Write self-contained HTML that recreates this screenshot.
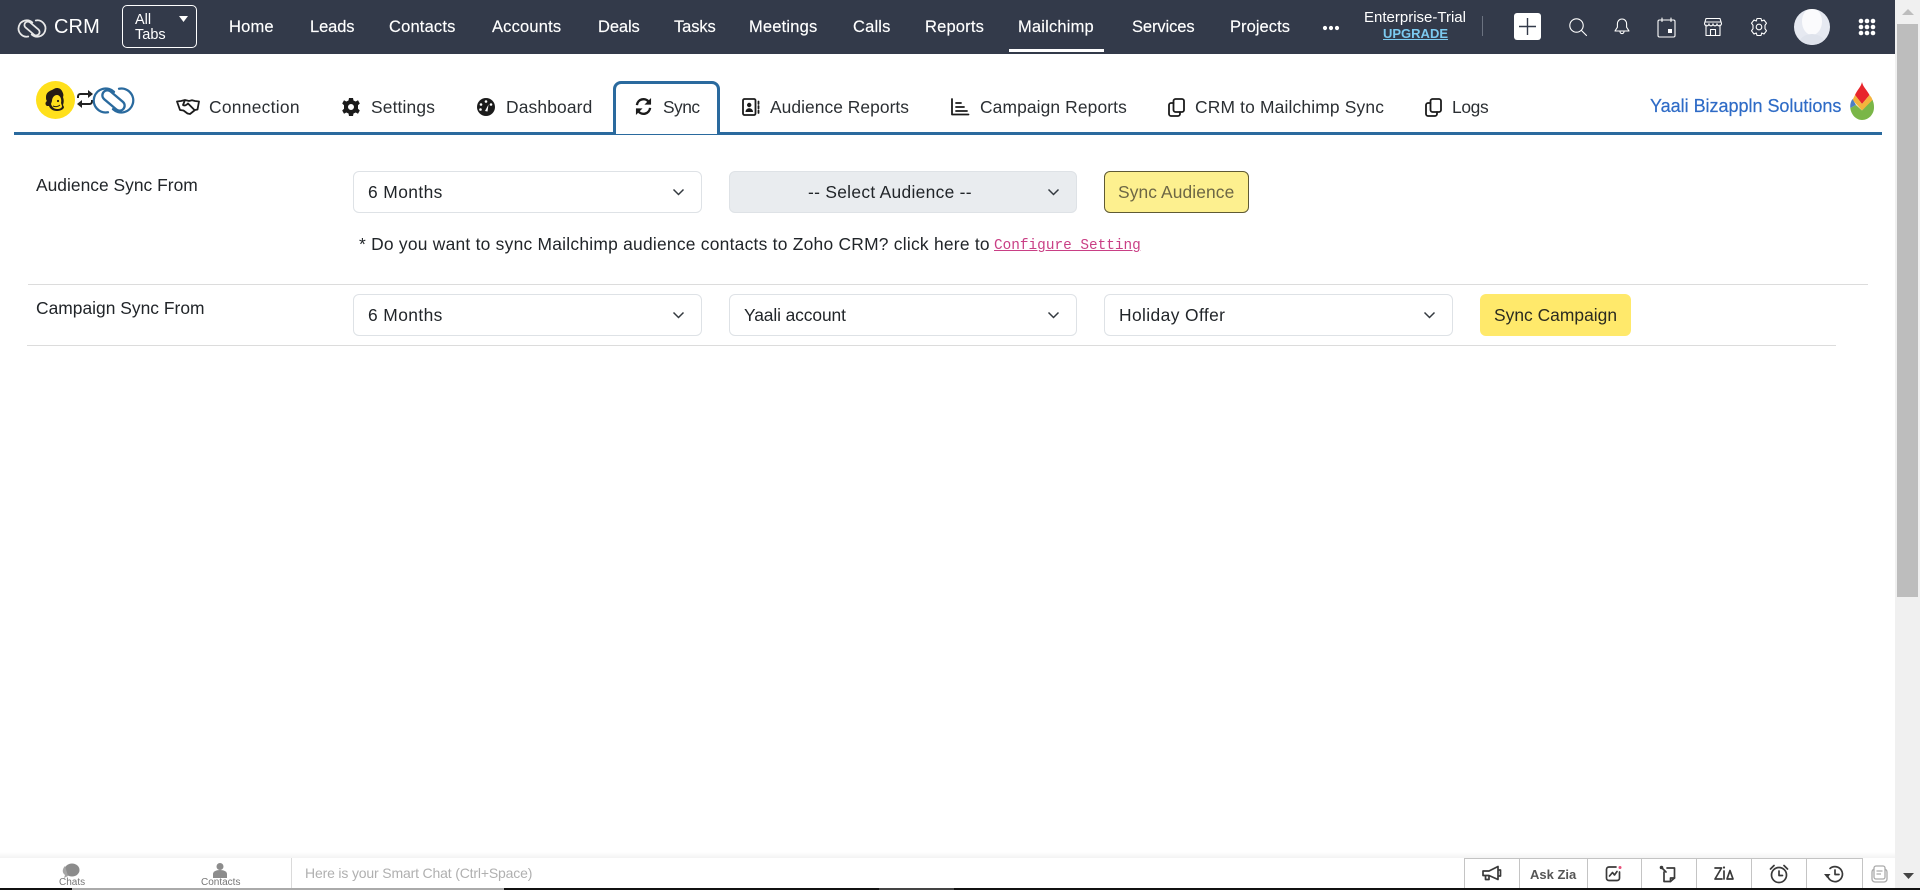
<!DOCTYPE html>
<html><head><meta charset="utf-8"><title>Mailchimp Sync</title>
<style>
html,body{margin:0;padding:0;width:1920px;height:890px;overflow:hidden;background:#fff;font-family:"Liberation Sans",sans-serif}
.a{position:absolute}
.t{position:absolute;white-space:nowrap}
.n{top:14px;line-height:26px;height:26px;font-size:16.5px;letter-spacing:.18px;color:#fff;-webkit-text-stroke:.15px #fff}
.tab{top:94px;line-height:26px;font-size:17.4px;letter-spacing:.05px;color:#2b2f33}
.lab{font-size:17.4px;letter-spacing:.02px;line-height:26px;color:#212529}
.sel{position:absolute;box-sizing:border-box;height:42px;border:1px solid #dee2e6;border-radius:6px;background:#fff}
.sel span{position:absolute;left:14px;top:7px;line-height:26px;font-size:17.4px;letter-spacing:.3px;color:#212529;white-space:nowrap}
.sel svg{position:absolute;right:16px;top:14px}
svg{position:absolute;overflow:visible}
.hi{fill:none;stroke:#fff;stroke-width:1.1;stroke-linecap:round;stroke-linejoin:round}
.bi{fill:none;stroke:#3a3a3a;stroke-width:1.7;stroke-linecap:round;stroke-linejoin:round}
.ti{fill:none;stroke:#1b1b1b;stroke-width:1.8;stroke-linecap:round;stroke-linejoin:round}
.dv{position:absolute;top:858px;width:1px;height:30px;background:#c4c4c4}
</style></head><body>

<!-- header -->
<div class="a" style="left:0;top:0;width:1895px;height:54px;background:#333a4a"></div>
<svg style="left:18px;top:19px" width="28" height="19" viewBox="0 0 41 27"><g fill="none" stroke="#e8e8e8" stroke-width="2.600" stroke-linecap="round"><path d="M21 4.800A12 12 0 1 0 15 25.300"/><path d="M20 22.200A12 12 0 1 0 26 1.700"/><rect x="7.500" y="8.500" width="26" height="10" rx="5" transform="rotate(40 20.500 13.500)"/></g></svg>
<div class="t" style="left:54px;top:14px;line-height:26px;font-size:20px;letter-spacing:.1px;color:#fff">CRM</div>
<div class="a" style="left:122px;top:5px;width:75px;height:43px;box-sizing:border-box;border:1.5px solid #fff;border-radius:5px"></div>
<div class="t" style="left:135px;top:13px;font-size:14.5px;line-height:14.5px;color:#fff">All<br>Tabs</div>
<svg style="left:179px;top:16px" width="9" height="6"><path d="M0 0H9L4.5 6Z" fill="#fff"/></svg>

<div class="t n" style="left:229px">Home</div>
<div class="t n" style="left:310px;letter-spacing:-.1px">Leads</div>
<div class="t n" style="left:389px">Contacts</div>
<div class="t n" style="left:492px">Accounts</div>
<div class="t n" style="left:598px;letter-spacing:-.1px">Deals</div>
<div class="t n" style="left:674px;letter-spacing:-.1px">Tasks</div>
<div class="t n" style="left:749px">Meetings</div>
<div class="t n" style="left:853px">Calls</div>
<div class="t n" style="left:925px">Reports</div>
<div class="t n" style="left:1018px">Mailchimp</div>
<div class="a" style="left:1009px;top:49px;width:95px;height:3px;background:#fff"></div>
<div class="t n" style="left:1132px;letter-spacing:-.1px">Services</div>
<div class="t n" style="left:1230px;letter-spacing:.05px">Projects</div>
<svg style="left:1322px;top:25px" width="18" height="6"><circle cx="3" cy="3" r="2.1" fill="#fff"/><circle cx="9" cy="3" r="2.1" fill="#fff"/><circle cx="15" cy="3" r="2.1" fill="#fff"/></svg>
<div class="t" style="left:1364px;top:9px;line-height:18px;font-size:15px;color:#fff">Enterprise-Trial</div>
<div class="t" style="left:1383px;top:26px;line-height:16px;font-size:13px;font-weight:700;color:#7ccaf0;text-decoration:underline">UPGRADE</div>
<div class="a" style="left:1482px;top:16px;width:1px;height:20px;background:#6b7280"></div>
<div class="a" style="left:1514px;top:13px;width:27px;height:27px;border-radius:3px;background:#fff"></div>
<svg style="left:1514px;top:13px" width="27" height="27"><path d="M13.5 5V22M5 13.5H22" stroke="#333a4a" stroke-width="1.4"/></svg>
<svg style="left:1568px;top:17px" width="20" height="20" viewBox="0 0 20 20"><circle cx="8.5" cy="8.5" r="6.7" class="hi"/><path d="M13.5 13.5 18.5 18.5" class="hi"/></svg>
<svg style="left:1612px;top:17px" width="20" height="20" viewBox="0 0 20 20"><path d="M10 2c-3 0-4.6 2.3-4.6 5v3.2L3 14h14l-2.4-3.800V7c0-2.700-1.600-5-4.600-5Z M8 14.500c0 2.800 4 2.800 4 0" class="hi"/></svg>
<svg style="left:1657px;top:17px" width="19" height="21" viewBox="0 0 19 21"><rect x="1" y="3" width="17" height="17" rx="1.500" class="hi"/><path d="M5 1V4.500M14 1V4.500" class="hi"/><rect x="11" y="12" width="4" height="4" fill="#fff"/></svg>
<svg style="left:1703px;top:17px" width="20" height="20" viewBox="0 0 20 20"><path d="M3 8V18.500H17V8M1.500 6.500 3 1.500H17L18.500 6.500C18.500 9.500 14 9.500 14 6.800 14 9.500 10 9.500 10 6.800 10 9.500 6 9.500 6 6.800 6 9.500 1.500 9.500 1.500 6.500ZM7.500 18.500V12.500H12.500V18.500M2 5H18" class="hi"/></svg>
<svg style="left:1749px;top:17px" width="20" height="20" viewBox="0 0 20 20"><path d="M8 1.500H12L12.700 4 15 3 17.500 6.200 16 8.300 16 11.700 17.500 13.800 15 17 12.700 16 12 18.500H8L7.300 16 5 17 2.500 13.800 4 11.700 4 8.300 2.500 6.200 5 3 7.300 4Z" class="hi"/><circle cx="10" cy="10" r="2.800" class="hi"/></svg>
<div class="a" style="left:1794px;top:9px;width:36px;height:36px;border-radius:50%;background:#e6e9f1;overflow:hidden">
<div class="a" style="left:8px;top:-1px;width:20px;height:27px;border-radius:50%;background:#fbfbfd"></div>
<div class="a" style="left:5px;top:25px;width:26px;height:20px;border-radius:50%;background:#dfe3ec"></div>
</div>
<svg style="left:1858px;top:18px" width="18" height="18"><g fill="#fff"><circle cx="3" cy="3" r="2.300"/><circle cx="9" cy="3" r="2.300"/><circle cx="15" cy="3" r="2.300"/><circle cx="3" cy="9" r="2.300"/><circle cx="9" cy="9" r="2.300"/><circle cx="15" cy="9" r="2.300"/><circle cx="3" cy="15" r="2.300"/><circle cx="9" cy="15" r="2.300"/><circle cx="15" cy="15" r="2.300"/></g></svg>

<!-- scrollbar -->
<div class="a" style="left:1895px;top:0;width:25px;height:888px;background:#f0f0f0"></div>
<div class="a" style="left:1897px;top:24px;width:21px;height:573px;background:#bdbdbd"></div>
<svg style="left:1902px;top:9px" width="12" height="6"><path d="M0 6H12L6 0Z" fill="#bdbdbd"/></svg>

<!-- tab row -->
<div class="a" style="left:14px;top:132px;width:1868px;height:3px;background:#2a6a9e"></div>
<div class="a" style="left:613px;top:81px;width:107px;height:53px;box-sizing:border-box;border:3px solid #2a6a9e;border-bottom:0;border-radius:8px 8px 0 0;background:#fff"></div>

<!-- logo -->
<div class="a" style="left:36px;top:81px;width:39px;height:38px;border-radius:50%;background:#ffe01b"></div>
<svg style="left:36px;top:81px" width="39" height="38" viewBox="0 0 39 38"><path d="M21 7c-2 0-3 1-5 2-3 1-6 3-6 7 0 2 0 3 1 4-2 1-2 4 0 5 1 0 1 0 2 0 1 3 4 5 8 5 4 0 7-2 7-4l-1-2c1-3 1-5 0-8 1-2 0-4-1-6-1-2-3-3-5-3Z" fill="#241c15"/><path d="M21 14c-3 0-5 3-5 6l-1 3c1 3 3 5 6 5 3 0 5-1 5-3l-1-3c1-4-1-8-4-8Z" fill="#ffe01b"/><circle cx="22" cy="20" r="1.100" fill="#241c15"/><path d="M17 25c2 1 5 1 7-1" fill="none" stroke="#241c15" stroke-width="1"/></svg>
<svg style="left:76px;top:90px" width="18" height="18" viewBox="0 0 18 18"><g fill="none" stroke="#222" stroke-width="2"><path d="M2 8V6.500C2 5 3 4 4.500 4H13"/><path d="M16 10V11.500C16 13 15 14 13.500 14H5"/></g><path d="M12 0V8L17 4ZM6 10V18L1 14Z" fill="#222"/></svg>
<svg style="left:93px;top:87px" width="41" height="27" viewBox="0 0 41 27"><g fill="none" stroke="#2a6a9e" stroke-width="2.300" stroke-linecap="round"><path d="M21 4.800A12 12 0 1 0 15 25.300"/><path d="M20 22.200A12 12 0 1 0 26 1.700"/><rect x="7.500" y="8.500" width="26" height="10" rx="5" transform="rotate(40 20.500 13.500)"/></g></svg>

<!-- tabs -->
<svg style="left:176px;top:99px" width="24" height="16" viewBox="0 0 24 16"><path d="M1 2.500 5 2l4-1 4 1 3-.800 3 .800 4 .500-1.500 8-2.500.500-5 4-2.500-.500-4-3-3.500-.500Z M9 1 7 6c1.500 1 3.500 0 5-1.500l6 6" class="ti" stroke-width="2.100"/></svg>
<svg style="left:342px;top:98px" width="18" height="18" viewBox="0 0 18 18"><path fill-rule="evenodd" fill="#1b1b1b" d="M7 0H11L11.500 2.500 13.700 3.500 16 2.200 17.800 5.500 16 7.200V10.800L17.800 12.500 16 15.800 13.700 14.500 11.500 15.500 11 18H7L6.500 15.500 4.300 14.500 2 15.800 .2 12.500 2 10.800V7.200L.2 5.500 2 2.200 4.300 3.500 6.500 2.500ZM9 6A3 3 0 1 0 9 12 3 3 0 1 0 9 6Z"/></svg>
<svg style="left:477px;top:98px" width="18" height="18" viewBox="0 0 18 18"><circle cx="9" cy="9" r="9" fill="#1b1b1b"/><circle cx="9" cy="3.500" r="1.300" fill="#fff"/><circle cx="4" cy="6.500" r="1.300" fill="#fff"/><circle cx="14" cy="6.500" r="1.300" fill="#fff"/><circle cx="3.500" cy="11.500" r="1.300" fill="#fff"/><path d="M8 13 11.500 6.500 10.500 13.500Z" fill="#fff"/></svg>
<svg style="left:635px;top:98px" width="17" height="17" viewBox="0 0 18 18"><g fill="none" stroke="#1b1b1b" stroke-width="2.500"><path d="M2 7.500A7 7 0 0 1 14.500 4"/><path d="M16 10.500A7 7 0 0 1 3.500 14"/></g><path d="M17 0V7H10ZM1 18V11H8Z" fill="#1b1b1b"/></svg>
<svg style="left:742px;top:98px" width="18" height="18" viewBox="0 0 18 18"><rect x="1" y="1" width="12.500" height="16" rx="1.500" class="ti"/><circle cx="7.200" cy="7" r="2.200" fill="#1b1b1b"/><path d="M3.500 14c0-5 7.500-5 7.500 0Z" fill="#1b1b1b"/><path d="M16.500 3.500V6M16.500 8V10.500M16.500 12.500V15" class="ti"/></svg>
<svg style="left:951px;top:98px" width="18" height="18" viewBox="0 0 18 18"><path d="M1 1V16.500H17.500" class="ti"/><path d="M5 5H10M5 9H13M5 13H16" class="ti" stroke-width="1.500"/></svg>
<svg style="left:1168px;top:98px" width="17" height="19" viewBox="0 0 17 19"><rect x="5.500" y="1" width="10.500" height="13" rx="2" class="ti"/><path d="M5.500 5H3C2 5 1 6 1 7V16C1 17 2 18 3 18H10C11 18 12 17 12 16V14" class="ti"/></svg>
<svg style="left:1425px;top:98px" width="17" height="19" viewBox="0 0 17 19"><rect x="5.500" y="1" width="10.500" height="13" rx="2" class="ti"/><path d="M5.500 5H3C2 5 1 6 1 7V16C1 17 2 18 3 18H10C11 18 12 17 12 16V14" class="ti"/></svg>
<div class="t tab" style="left:209px;letter-spacing:.28px">Connection</div>
<div class="t tab" style="left:371px;letter-spacing:.15px">Settings</div>
<div class="t tab" style="left:506px;letter-spacing:.15px">Dashboard</div>
<div class="t tab" style="left:663px;letter-spacing:-.55px">Sync</div>
<div class="t tab" style="left:770px">Audience Reports</div>
<div class="t tab" style="left:980px;letter-spacing:.12px">Campaign Reports</div>
<div class="t tab" style="left:1195px;letter-spacing:.17px">CRM to Mailchimp Sync</div>
<div class="t tab" style="left:1452px;letter-spacing:-.35px">Logs</div>
<div class="t" style="left:1650px;top:93px;line-height:26px;font-size:18px;letter-spacing:-.02px;color:#2e6bc6;-webkit-text-stroke:.2px #2e6bc6">Yaali Bizappln Solutions</div>

<!-- drop logo -->
<svg style="left:1850px;top:82px" width="24" height="38" viewBox="0 0 24 38"><path d="M12 0C11 5 7 8 5 13L12 22 19.500 13C17 8 13 5 12 0Z" fill="#e8262c"/><path d="M5 13 2.500 18 12 28.500 19 22 23 19 21.500 15.500 19.500 13 12 22Z" fill="#f4b43d"/><path d="M2.500 17C.5 20 0 23 .3 26L6 23Z" fill="#4c7ec4"/><path d="M.3 26C1 32.500 6 38 12 38 19 38 24 32 24 25.500 24 22 23.500 20.500 22.500 18L12 28.500 6 23Z" fill="#7ab648"/></svg>

<!-- form -->
<div class="t lab" style="left:36px;top:172px">Audience Sync From</div>
<div class="sel" style="left:353px;top:171px;width:349px"><span style="letter-spacing:.4px">6 Months</span><svg width="13" height="12"><path d="M1.500 3.500 6.500 8.500 11.500 3.500" fill="none" stroke="#343a40" stroke-width="1.500"/></svg></div>
<div class="sel" style="left:729px;top:171px;width:348px;background:#e9ecef"><span style="left:78px">-- Select Audience --</span><svg width="13" height="12"><path d="M1.500 3.500 6.500 8.500 11.500 3.500" fill="none" stroke="#343a40" stroke-width="1.500"/></svg></div>
<div class="a" style="left:1104px;top:171px;width:145px;height:42px;box-sizing:border-box;border:1px solid #5f5a34;border-radius:6px;background:#fdf08f"></div>
<div class="t" style="left:1118px;top:179px;line-height:26px;font-size:17.4px;letter-spacing:.1px;color:#6d6745">Sync Audience</div>
<div class="t lab" style="left:359px;top:231px;letter-spacing:.25px">* Do you want to sync Mailchimp audience contacts to Zoho CRM? click here to</div>
<div class="t" style="left:994px;top:236px;line-height:20px;font-family:'Liberation Mono',monospace;font-size:14.4px;color:#c93f85;text-decoration:underline">Configure Setting</div>
<div class="a" style="left:28px;top:284px;width:1840px;height:1px;background:#dcdcdc"></div>

<div class="t lab" style="left:36px;top:295px">Campaign Sync From</div>
<div class="sel" style="left:353px;top:294px;width:349px"><span style="letter-spacing:.4px">6 Months</span><svg width="13" height="12"><path d="M1.500 3.500 6.500 8.500 11.500 3.500" fill="none" stroke="#343a40" stroke-width="1.500"/></svg></div>
<div class="sel" style="left:729px;top:294px;width:348px"><span style="letter-spacing:-.1px">Yaali account</span><svg width="13" height="12"><path d="M1.500 3.500 6.500 8.500 11.500 3.500" fill="none" stroke="#343a40" stroke-width="1.500"/></svg></div>
<div class="sel" style="left:1104px;top:294px;width:349px"><span style="letter-spacing:.4px">Holiday Offer</span><svg width="13" height="12"><path d="M1.500 3.500 6.500 8.500 11.500 3.500" fill="none" stroke="#343a40" stroke-width="1.500"/></svg></div>
<div class="a" style="left:1480px;top:294px;width:151px;height:42px;border-radius:6px;background:#ffe96b"></div>
<div class="t" style="left:1494px;top:302px;line-height:26px;font-size:17.4px;letter-spacing:.02px;color:#2b2b20">Sync Campaign</div>
<div class="a" style="left:27px;top:345px;width:1809px;height:1px;background:#dcdcdc"></div>

<!-- bottom bar -->
<div class="a" style="left:0;top:852px;width:1895px;height:6px;background:linear-gradient(#fff,#f3f3f3)"></div>
<div class="a" style="left:0;top:858px;width:1895px;height:30px;background:#fff"></div>
<div class="a" style="left:1464px;top:858px;width:398px;height:1px;background:#c4c4c4"></div>
<svg style="left:62px;top:863px" width="18" height="16" viewBox="0 0 18 16"><ellipse cx="10" cy="7" rx="7.500" ry="6.500" fill="#8c8c8c"/><path d="M3 3C0 6 0 10 3 12L2 15 6 13Z" fill="#a5a5a5"/></svg>
<div class="t" style="left:59px;top:877px;line-height:12px;font-size:10px;color:#777">Chats</div>
<svg style="left:213px;top:863px" width="14" height="16" viewBox="0 0 14 16"><circle cx="7" cy="3.500" r="3.500" fill="#8c8c8c"/><path d="M0 15V11C0 8.500 3 7 7 7S14 8.500 14 11V15Z" fill="#8c8c8c"/></svg>
<div class="t" style="left:201px;top:877px;line-height:12px;font-size:10px;color:#777">Contacts</div>
<div class="a" style="left:291px;top:858px;width:1px;height:30px;background:#dadada"></div>
<div class="t" style="left:305px;top:864px;line-height:18px;font-size:14px;letter-spacing:-.16px;color:#b0b0b0">Here is your Smart Chat (Ctrl+Space)</div>

<div class="dv" style="left:1464px"></div><div class="dv" style="left:1519px"></div><div class="dv" style="left:1587px"></div><div class="dv" style="left:1641px"></div><div class="dv" style="left:1696px"></div><div class="dv" style="left:1751px"></div><div class="dv" style="left:1806px"></div><div class="dv" style="left:1862px"></div>

<svg style="left:1482px;top:865px" width="20" height="18" viewBox="0 0 20 18"><path d="M1 6H7L16 1.500V14.500L7 10.500H1ZM3.500 10.500V14.500H7V10.500M16 5H18.500V11H16" class="bi"/></svg>
<div class="t" style="left:1530px;top:866px;line-height:18px;font-size:13px;font-weight:700;color:#555">Ask Zia</div>
<svg style="left:1605px;top:865px" width="18" height="18" viewBox="0 0 18 18"><path d="M11 2H4C2.500 2 1.500 3 1.500 4.500V13C1.500 14.500 2.500 15.500 4 15.500H12C13.500 15.500 14.500 14.500 14.500 13V7" class="bi"/><path d="M4.500 11 7.500 7.500 9.500 10 12 6.500" class="bi" stroke-width="1.400"/><circle cx="15" cy="2.500" r="1.500" fill="#e8507a"/></svg>
<svg style="left:1659px;top:865px" width="18" height="18" viewBox="0 0 18 18"><path d="M8 3H15.500V13L11.500 16.500H5V7" class="bi"/><path d="M11.500 16.500V13H15.500" class="bi" stroke-width="1.400"/><path d="M2 2 7 7" class="bi"/><circle cx="2.500" cy="2.500" r="1.800" fill="#3a3a3a"/></svg>
<svg style="left:1714px;top:865px" width="20" height="16" viewBox="0 0 20 16"><path d="M1 3H7.500L1 14H8M10 6V14M13 14 16 5.500 19 14H13" class="bi" stroke-width="1.500"/><circle cx="10" cy="2.500" r="1.100" fill="#3a3a3a"/></svg>
<svg style="left:1769px;top:864px" width="20" height="20" viewBox="0 0 20 20"><circle cx="10" cy="11" r="7.500" class="bi"/><path d="M10 7V11.500H13.500" class="bi" stroke-width="1.500"/><path d="M1.500 5 5 1.500M18.500 5 15 1.500" class="bi" stroke-width="2.200"/></svg>
<svg style="left:1824px;top:865px" width="20" height="18" viewBox="0 0 20 18"><path d="M3.500 10A7.500 7.500 0 1 0 6 3.500" class="bi"/><path d="M11 5V9.500H15" class="bi" stroke-width="1.500"/><path d="M0 9H6.500L3.200 13Z" fill="#3a3a3a"/></svg>
<svg style="left:1871px;top:865px" width="17" height="18" viewBox="0 0 17 18"><g fill="#fff" stroke="#aaa" stroke-width="1.300"><rect x="1" y="4" width="15" height="13" rx="3"/><rect x="3" y="1" width="11" height="13" rx="2"/><path d="M5.500 6H11.500M5.500 9H10" fill="none"/></g></svg>
<svg style="left:1903px;top:873px" width="11" height="6"><path d="M0 0H11L5.500 6Z" fill="#444"/></svg>

<!-- bottom strip -->
<div class="a" style="left:0;top:888px;width:1920px;height:2px;background:#111"></div>
<div class="a" style="left:72px;top:888px;width:432px;height:2px;background:#aaa"></div>
<div class="a" style="left:879px;top:888px;width:75px;height:2px;background:#444"></div>
</body></html>
